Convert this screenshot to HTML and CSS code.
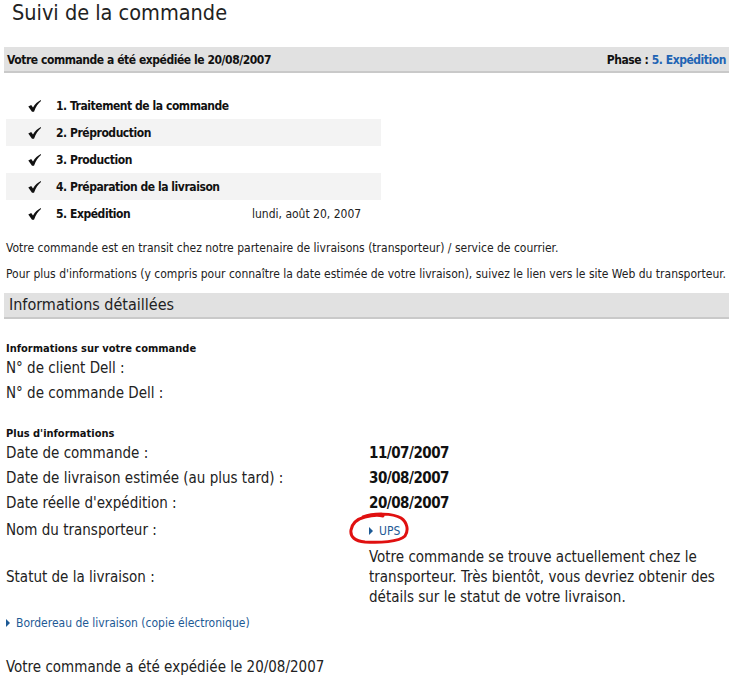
FILE: index.html
```html
<!DOCTYPE html>
<html lang="fr">
<head>
<meta charset="utf-8">
<title>Suivi de la commande</title>
<link rel="stylesheet" href="styles.css">
</head>
<body>
<div class="page">
  <h1 class="title">Suivi de la commande</h1>

  <div class="statusbar">
    <span>Votre commande a été expédiée le 20/08/2007</span>
    <span>Phase : <span class="blue">5. Expédition</span></span>
  </div>

  <ul class="steps">
    <li class="step"><svg class="check" width="13" height="12" viewBox="0 0 13 12"><path d="M0.3 6.6 L3.2 5 L5 7.4 C7 4.2 9.6 1.6 12.8 0 L13 1 C10.2 3.2 7.8 6.8 6 11.8 L4 11.8 Z" fill="#111"/></svg><span class="label">1. Traitement de la commande</span></li>
    <li class="step alt"><svg class="check" width="13" height="12" viewBox="0 0 13 12"><path d="M0.3 6.6 L3.2 5 L5 7.4 C7 4.2 9.6 1.6 12.8 0 L13 1 C10.2 3.2 7.8 6.8 6 11.8 L4 11.8 Z" fill="#111"/></svg><span class="label">2. Préproduction</span></li>
    <li class="step"><svg class="check" width="13" height="12" viewBox="0 0 13 12"><path d="M0.3 6.6 L3.2 5 L5 7.4 C7 4.2 9.6 1.6 12.8 0 L13 1 C10.2 3.2 7.8 6.8 6 11.8 L4 11.8 Z" fill="#111"/></svg><span class="label">3. Production</span></li>
    <li class="step alt"><svg class="check" width="13" height="12" viewBox="0 0 13 12"><path d="M0.3 6.6 L3.2 5 L5 7.4 C7 4.2 9.6 1.6 12.8 0 L13 1 C10.2 3.2 7.8 6.8 6 11.8 L4 11.8 Z" fill="#111"/></svg><span class="label">4. Préparation de la livraison</span></li>
    <li class="step"><svg class="check" width="13" height="12" viewBox="0 0 13 12"><path d="M0.3 6.6 L3.2 5 L5 7.4 C7 4.2 9.6 1.6 12.8 0 L13 1 C10.2 3.2 7.8 6.8 6 11.8 L4 11.8 Z" fill="#111"/></svg><span class="label">5. Expédition</span><span class="date">lundi, août 20, 2007</span></li>
  </ul>

  <p class="note">Votre commande est en transit chez notre partenaire de livraisons (transporteur) / service de courrier.</p>
  <p class="note">Pour plus d'informations (y compris pour connaître la date estimée de votre livraison), suivez le lien vers le site Web du transporteur.</p>

  <div class="sectionbar">Informations détaillées</div>

  <div class="group">
    <div class="gtitle">Informations sur votre commande</div>
    <div class="row"><span class="k">N° de client Dell :</span></div>
    <div class="row"><span class="k">N° de commande Dell :</span></div>
  </div>

  <div class="group">
    <div class="gtitle">Plus d'informations</div>
    <div class="row"><span class="k">Date de commande :</span><span class="v bold">11/07/2007</span></div>
    <div class="row"><span class="k">Date de livraison estimée (au plus tard) :</span><span class="v bold">30/08/2007</span></div>
    <div class="row"><span class="k">Date réelle d'expédition :</span><span class="v bold">20/08/2007</span></div>
    <div class="row carrier"><span class="k">Nom du transporteur :</span><span class="v"><span class="ups"><a class="link small" href="#"><span class="tri"></span>UPS</a><svg class="circle" width="62" height="32" viewBox="0 0 62 32"><path d="M14 5 C24 1 44 1 52 6 C58 10 60 18 56 24 C50 30 30 31 16 30 C6 29 1 25 2 18 C3 12 8 7 16 5 C22 3.5 30 3 34 4" fill="none" stroke="#e01010" stroke-width="3" stroke-linecap="round"/></svg></span></span></div>
    <div class="row status"><span class="k">Statut de la livraison :</span><span class="v">Votre commande se trouve actuellement chez le transporteur. Très bientôt, vous devriez obtenir des détails sur le statut de votre livraison.</span></div>
  </div>

  <a class="link bordereau" href="#"><span class="tri"></span>Bordereau de livraison (copie électronique)</a>

  <p class="final">Votre commande a été expédiée le 20/08/2007</p>
</div>
</body>
</html>
```

FILE: styles.css
```css
* { box-sizing: border-box; }
html, body { margin: 0; padding: 0; background: #fff; }
body {
  font-family: "DejaVu Sans Condensed", "Liberation Sans", sans-serif;
  color: #111;
  width: 740px;
}
.page { padding: 0 0 0 4px; width: 729px; }
.title {
  margin: 0;
  padding: 0 0 0 8px;
  font-size: 21.5px;
  font-weight: normal;
  line-height: 25px;
  color: #222;
  height: 47px;
}
.statusbar {
  display: flex;
  justify-content: space-between;
  align-items: center;
  height: 26px;
  background: #e1e1e1;
  border-bottom: 2px solid #c9c9c9;
  padding: 2px 3px 0 3px;
  font-size: 12px;
  font-weight: bold;
  letter-spacing: -0.45px;
}
.blue { color: #1f64b4; }
.steps {
  list-style: none;
  margin: 19px 0 0 2px;
  padding: 0;
  width: 375px;
}
.step {
  display: flex;
  align-items: center;
  height: 27px;
  font-size: 12px;
}
.step.alt { background: #f3f3f3; }
.check {
  margin-left: 22px;
  margin-right: 15px;
  flex: none;
}
.label { font-weight: bold; width: 196px; letter-spacing: -0.45px; }
.date { font-size: 12px; color: #222; }
.note {
  margin: 0;
  padding: 0 0 0 2px;
  font-size: 12px;
  line-height: 14px;
  color: #222;
}
.steps + .note { margin-top: 14px; }
.note + .note { margin-top: 12px; }
.sectionbar {
  margin-top: 12px;
  height: 26px;
  background: #e1e1e1;
  border-bottom: 2px solid #c9c9c9;
  padding: 0 5px;
  font-size: 16px;
  line-height: 24px;
  color: #222;
}
.group { padding-left: 2px; margin-top: 23px; }
.group + .group { margin-top: 21px; }
.gtitle { font-size: 11px; font-weight: bold; line-height: 14px; }
.row {
  display: flex;
  font-size: 15px;
  line-height: 25px;
  color: #222;
}
.row .k { width: 363px; flex: none; }
.row .v { flex: 1; }
.bold { font-weight: bold; color: #111; letter-spacing: -0.5px; }
.row.carrier { padding-top: 2px; }
.row.status { align-items: center; line-height: 20px; margin-top: 3px; }
.row.status .v { padding-right: 10px; }
.ups { position: relative; display: inline-block; }
.circle { position: absolute; left: -20px; top: -6px; }
.link {
  color: #1d5a95;
  text-decoration: none;
  font-size: 12px;
  display: inline-flex;
  align-items: center;
}
.tri {
  width: 0; height: 0;
  border-left: 4px solid #1d5a95;
  border-top: 4px solid transparent;
  border-bottom: 4px solid transparent;
  margin-right: 6px;
}
.bordereau { margin: 9px 0 0 2px; }
.final {
  margin: 27px 0 0 2px;
  font-size: 15px;
  color: #222;
}
```
